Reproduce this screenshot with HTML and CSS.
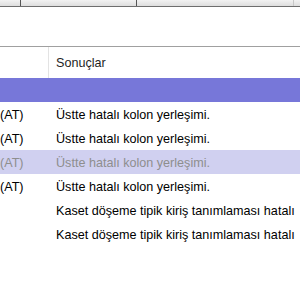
FILE: index.html
```html
<!DOCTYPE html>
<html lang="tr">
  <head>
    <meta charset="UTF-8" />
    <title>Sonuçlar</title>
    <link rel="stylesheet" href="styles.css">
  </head>
  <body>
    <div class="top-bar">
      <div class="top-cell top-a"></div>
      <div class="top-cell top-b"></div>
      <div class="top-cell top-c"></div>
    </div>
    <div class="blank"></div>
    <div class="grid">
      <div class="row head">
        <div class="cell c1"></div>
        <div class="cell c2">Sonuçlar</div>
      </div>
      <div class="row group"></div>
      <div class="row">
        <div class="cell c1">(AT)</div>
        <div class="cell c2">Üstte hatalı kolon yerleşimi.</div>
      </div>
      <div class="row">
        <div class="cell c1">(AT)</div>
        <div class="cell c2">Üstte hatalı kolon yerleşimi.</div>
      </div>
      <div class="row selected">
        <div class="cell c1">(AT)</div>
        <div class="cell c2">Üstte hatalı kolon yerleşimi.</div>
      </div>
      <div class="row">
        <div class="cell c1">(AT)</div>
        <div class="cell c2">Üstte hatalı kolon yerleşimi.</div>
      </div>
      <div class="row">
        <div class="cell c1"></div>
        <div class="cell c2">Kaset döşeme tipik kiriş tanımlaması hatalı</div>
      </div>
      <div class="row">
        <div class="cell c1"></div>
        <div class="cell c2">Kaset döşeme tipik kiriş tanımlaması hatalı</div>
      </div>
    </div>
  </body>
</html>
```

FILE: styles.css
```css
body {
  margin: 0;
  width: 300px;
  height: 300px;
  overflow: hidden;
  background: #ffffff;
  font-family: "Liberation Sans", Arial, sans-serif;
  font-size: 12.6px;
  color: #000000;
}
.top-bar {
  display: flex;
  height: 6px;
  border-bottom: 1px solid #6e6e6e;
  background: linear-gradient(#f2f2f2, #dedede);
}
.top-cell {
  height: 6px;
  border-right: 1px solid #555555;
}
.top-a {
  width: 20px;
}
.top-b {
  width: 115px;
}
.top-c {
  width: 156px;
  border-right-color: #c8c8c8;
}
.blank {
  height: 39px;
}
.grid {
  border-top: 1px solid #a0a0a0;
}
.row {
  display: flex;
  height: 24px;
  align-items: stretch;
  white-space: nowrap;
}
.cell {
  display: flex;
  align-items: center;
  padding-top: 1px;
  overflow: hidden;
}
.c1 {
  width: 49px;
  flex: none;
}
.c2 {
  padding-left: 7px;
  flex: 1;
}
.head {
  height: 31px;
}
.head .c1 {
  border-right: 1px solid #e3e3e3;
  width: 48px;
}
.head .c2 {
  color: #1e1e1e;
}
.group {
  background: #7777d9;
}
.selected {
  background: #d0d0f0;
  color: #8e8e8e;
}
```
